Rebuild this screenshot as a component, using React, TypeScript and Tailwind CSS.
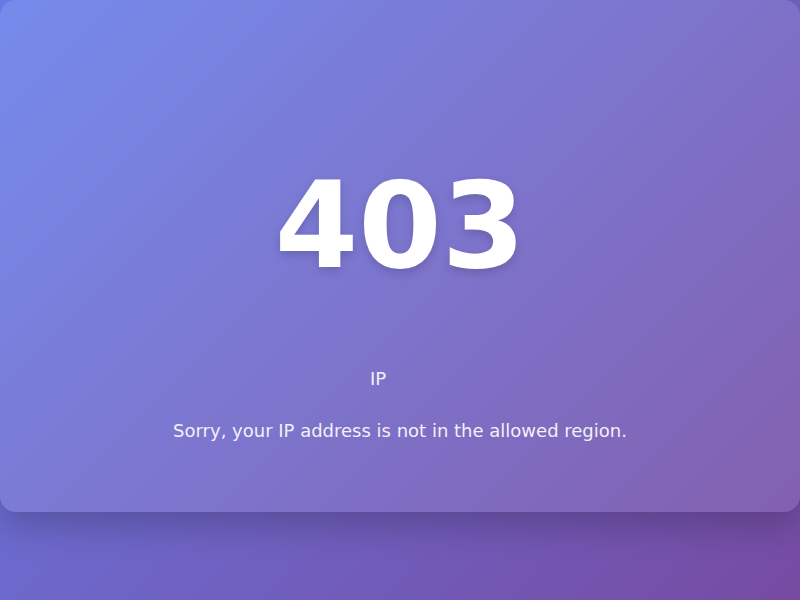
export default function App() {
  return (
    <div className="min-h-[600px] w-full bg-[linear-gradient(135deg,#667eea_0%,#764ba2_100%)] font-['DejaVu_Sans',sans-serif] text-white">
      <div className="h-[512px] rounded-2xl bg-white/10 pt-[166px] text-center shadow-[0_15px_35px_rgba(0,0,0,0.2)]">
        <h1 className="text-[120px] font-bold leading-none [text-shadow:0_4px_10px_rgba(0,0,0,0.15)]">
          403
        </h1>
        <p className="mt-[79px] pr-[44px] text-lg leading-[27px] opacity-90">IP</p>
        <p className="mt-[25px] text-lg leading-[27px] opacity-90">
          Sorry, your IP address is not in the allowed region.
        </p>
      </div>
    </div>
  );
}
